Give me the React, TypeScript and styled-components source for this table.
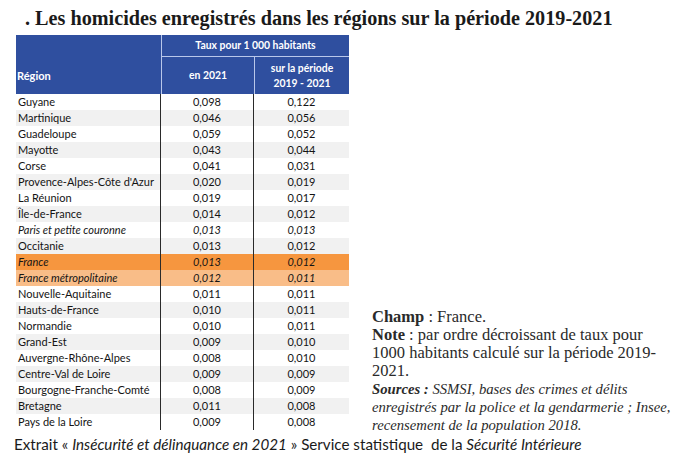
import React from "react";
import styled, { createGlobalStyle } from "styled-components";

const Global = createGlobalStyle`
  html, body { margin: 0; padding: 0; background: #fff; }
  body { width: 684px; height: 469px; overflow: hidden; }
`;

const Page = styled.div`
  display: flex;
  flex-direction: column;
  width: 684px;
`;

const Title = styled.h1`
  margin: 0;
  padding: 6px 0 0 25px;
  font-family: "Liberation Serif", serif;
  font-weight: bold;
  font-size: 20.2px;
  line-height: 24px;
  color: #1a1a1a;
  height: 29px;
`;

const Main = styled.div`
  display: flex;
  align-items: flex-end;
  gap: 23px;
  padding-left: 16px;
`;

const Table = styled.div`
  display: flex;
  flex-direction: column;
  width: 333px;
  font-family: Lato, "Liberation Sans", sans-serif;
  color: #141414;
`;

const Head = styled.div`
  display: grid;
  grid-template-columns: 145px 93px 95px;
  grid-template-rows: 21px 38px;
  background: #2f4f9f;
  color: #fff;
  font-weight: bold;
  font-size: 10.4px;
`;

const HeadCell = styled.div<{ $col: string; $row: string; $left?: boolean; $top?: boolean; $align?: string }>`
  grid-column: ${(p) => p.$col};
  grid-row: ${(p) => p.$row};
  display: flex;
  flex-direction: column;
  justify-content: center;
  align-items: ${(p) => p.$align || "center"};
  text-align: center;
  line-height: 15px;
  padding: ${(p) => (p.$align ? "22px 0 0 1px" : "0")};
  font-size: ${(p) => (p.$align ? "11px" : "inherit")};
  border-left: ${(p) => (p.$left ? "1.5px solid #b9c7ea" : "none")};
  border-top: ${(p) => (p.$top ? "1.5px solid #b9c7ea" : "none")};
`;

const Row = styled.div<{ $bg: string; $italic?: boolean }>`
  display: grid;
  grid-template-columns: 145px 93px 95px;
  height: 16px;
  background: ${(p) => p.$bg};
  font-size: 11px;
  font-style: ${(p) => (p.$italic ? "italic" : "normal")};
  line-height: 16px;
`;

const Cell = styled.div<{ $num?: boolean; $last?: boolean }>`
  text-align: ${(p) => (p.$num ? "center" : "left")};
  padding-left: ${(p) => (p.$num ? "0" : "2px")};
  border-right: ${(p) => (p.$last ? "none" : "1.3px solid #2a2a2a")};
  white-space: nowrap;
  overflow: hidden;
`;

const Notes = styled.div`
  font-family: "Liberation Serif", serif;
  line-height: 18px;
  color: #2a2a2a;
  width: 300px;
  margin-bottom: -4px;
`;

const Line = styled.div<{ $italic?: boolean }>`
  font-style: ${(p) => (p.$italic ? "italic" : "normal")};
  font-size: ${(p) => (p.$italic ? "14.7px" : "16.5px")};
  white-space: nowrap;
`;

const Footer = styled.div`
  padding: 5px 0 0 14px;
  font-family: Lato, "Liberation Sans", sans-serif;
  font-size: 15.2px;
  line-height: 18px;
  color: #1a1a1a;
  white-space: nowrap;
`;

type R = { name: string; a: string; b: string; italic?: boolean; tone?: "orange" | "light" };

const rows: R[] = [
  { name: "Guyane", a: "0,098", b: "0,122" },
  { name: "Martinique", a: "0,046", b: "0,056" },
  { name: "Guadeloupe", a: "0,059", b: "0,052" },
  { name: "Mayotte", a: "0,043", b: "0,044" },
  { name: "Corse", a: "0,041", b: "0,031" },
  { name: "Provence-Alpes-Côte d'Azur", a: "0,020", b: "0,019" },
  { name: "La Réunion", a: "0,019", b: "0,017" },
  { name: "Île-de-France", a: "0,014", b: "0,012" },
  { name: "Paris et petite couronne", a: "0,013", b: "0,013", italic: true },
  { name: "Occitanie", a: "0,013", b: "0,012" },
  { name: "France", a: "0,013", b: "0,012", italic: true, tone: "orange" },
  { name: "France métropolitaine", a: "0,012", b: "0,011", italic: true, tone: "light" },
  { name: "Nouvelle-Aquitaine", a: "0,011", b: "0,011" },
  { name: "Hauts-de-France", a: "0,010", b: "0,011" },
  { name: "Normandie", a: "0,010", b: "0,011" },
  { name: "Grand-Est", a: "0,009", b: "0,010" },
  { name: "Auvergne-Rhône-Alpes", a: "0,008", b: "0,010" },
  { name: "Centre-Val de Loire", a: "0,009", b: "0,009" },
  { name: "Bourgogne-Franche-Comté", a: "0,008", b: "0,009" },
  { name: "Bretagne", a: "0,011", b: "0,008" },
  { name: "Pays de la Loire", a: "0,009", b: "0,008" },
];

const bgFor = (r: R, i: number) =>
  r.tone === "orange" ? "#f6963f" : r.tone === "light" ? "#f9bd88" : i % 2 === 1 ? "#f1f1f1" : "#ffffff";

export default function App() {
  return (
    <Page>
      <Global />
      <Title>. Les homicides enregistrés dans les régions sur la période 2019-2021</Title>
      <Main>
        <Table>
          <Head>
            <HeadCell $col="1" $row="1 / 3" $align="flex-start">Région</HeadCell>
            <HeadCell $col="2 / 4" $row="1" $left>Taux pour 1 000 habitants</HeadCell>
            <HeadCell $col="2" $row="2" $left $top>en 2021</HeadCell>
            <HeadCell $col="3" $row="2" $left $top>
              <span>sur la période</span>
              <span>2019 - 2021</span>
            </HeadCell>
          </Head>
          {rows.map((r, i) => (
            <Row key={r.name} $bg={bgFor(r, i)} $italic={r.italic}>
              <Cell>{r.name}</Cell>
              <Cell $num>{r.a}</Cell>
              <Cell $num $last>{r.b}</Cell>
            </Row>
          ))}
        </Table>
        <Notes>
          <Line><b>Champ</b> : France.</Line>
          <Line><b>Note</b> : par ordre décroissant de taux pour</Line>
          <Line>1000 habitants calculé sur la période 2019-</Line>
          <Line>2021.</Line>
          <Line $italic><b>Sources :</b> SSMSI, bases des crimes et délits</Line>
          <Line $italic>enregistrés par la police et la gendarmerie ; Insee,</Line>
          <Line $italic>recensement de la population 2018.</Line>
        </Notes>
      </Main>
      <Footer>
        Extrait « <i>Insécurité et délinquance en 2021</i> » Service statistique&nbsp; de la <i>Sécurité Intérieure</i>
      </Footer>
    </Page>
  );
}
